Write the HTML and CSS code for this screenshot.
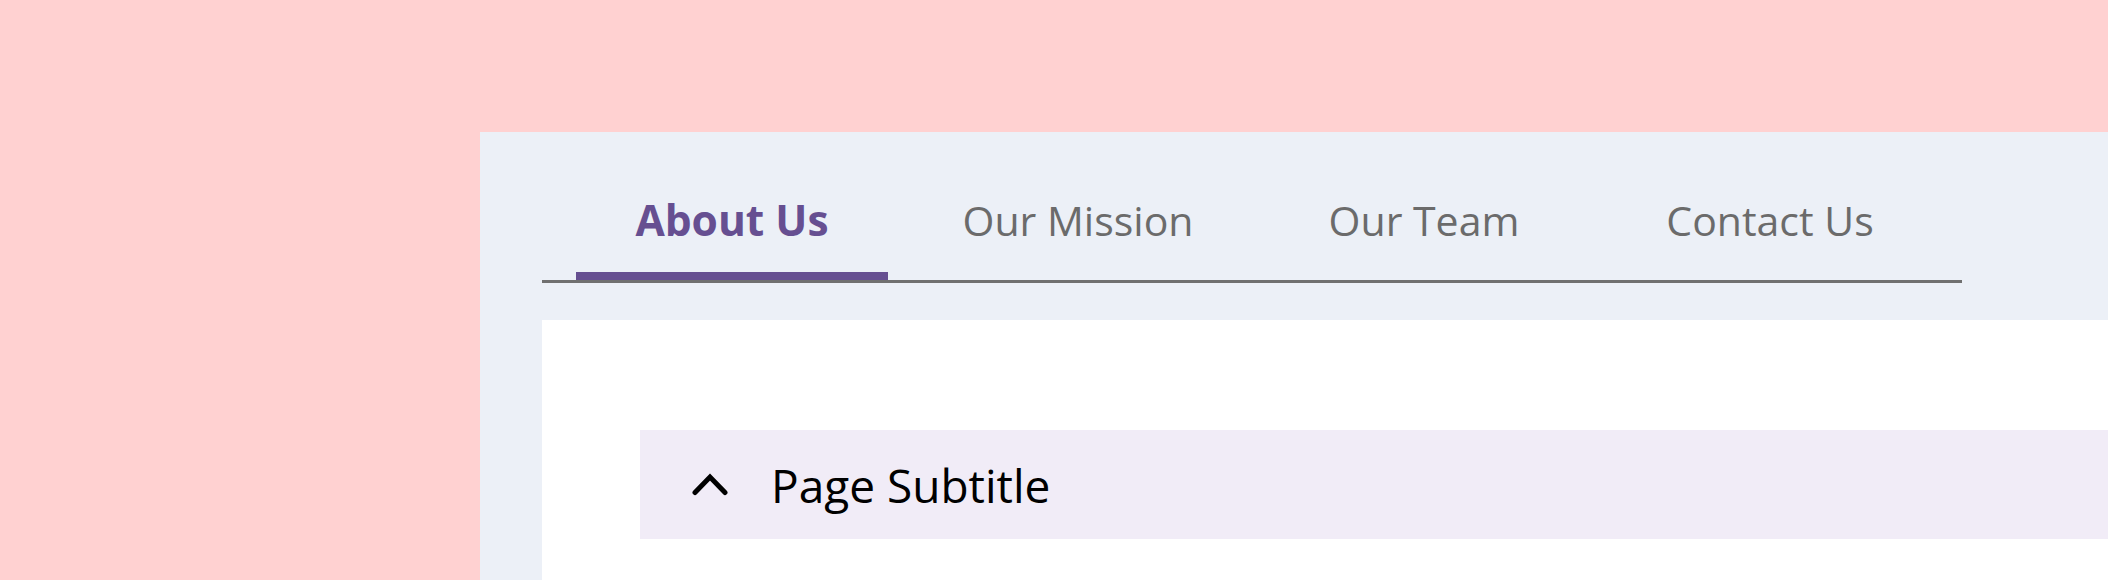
FILE: index.html
```html
<!DOCTYPE html>
<html lang="en">
<head>
<meta charset="utf-8">
<title>About Us</title>
<link rel="stylesheet" href="styles.css">
</head>
<body>
<div class="panel">
  <nav class="tabs">
    <a class="tab active"><span class="tab-label">About Us</span></a>
    <a class="tab"><span class="tab-label">Our Mission</span></a>
    <a class="tab"><span class="tab-label">Our Team</span></a>
    <a class="tab"><span class="tab-label">Contact Us</span></a>
  </nav>
  <section class="card">
    <div class="subtitle">
      <svg class="chevron" viewBox="0 0 36 24" width="36" height="24" aria-hidden="true">
        <polyline points="3,20.5 18,5 33,20.5" fill="none" stroke="#000" stroke-width="5" stroke-linecap="round" stroke-linejoin="miter"/>
      </svg>
      <span class="subtitle-text">Page Subtitle</span>
    </div>
  </section>
</div>
</body>
</html>
```

FILE: styles.css
```css
html, body {
  margin: 0;
  height: 100%;
}
body {
  background: #ffd1d1;
  padding: 132px 0 0 480px;
  box-sizing: border-box;
  overflow: hidden;
  font-family: "Open Sans", "Noto Sans", sans-serif;
}
.panel {
  background: #ecf0f7;
  padding: 60px 0 0 62px;
  min-height: 100%;
  box-sizing: border-box;
}
.tabs {
  display: flex;
  width: 1420px;
  box-sizing: border-box;
  padding-left: 17px;
  border-bottom: 3px solid #707070;
}
.tab {
  display: flex;
  justify-content: center;
  width: 346px;
  flex: none;
}
.tab-label {
  display: block;
  padding: 0 59px 24px;
  font-size: 41px;
  line-height: 56px;
  color: #6b6b6b;
  border-bottom: 8px solid transparent;
  white-space: nowrap;
}
.tab.active .tab-label {
  font-weight: 700;
  font-size: 42.5px;
  color: #664f91;
  border-bottom-color: #664f91;
}
.card {
  margin-top: 37px;
  background: #ffffff;
  padding: 110px 0 60px 98px;
}
.subtitle {
  display: flex;
  align-items: center;
  height: 109px;
  background: #f1ecf7;
  padding-left: 52px;
  gap: 43px;
}
.chevron {
  display: block;
  flex: none;
  margin-top: -2px;
}
.subtitle-text {
  font-size: 46px;
  line-height: 60px;
  color: #000000;
}
```
